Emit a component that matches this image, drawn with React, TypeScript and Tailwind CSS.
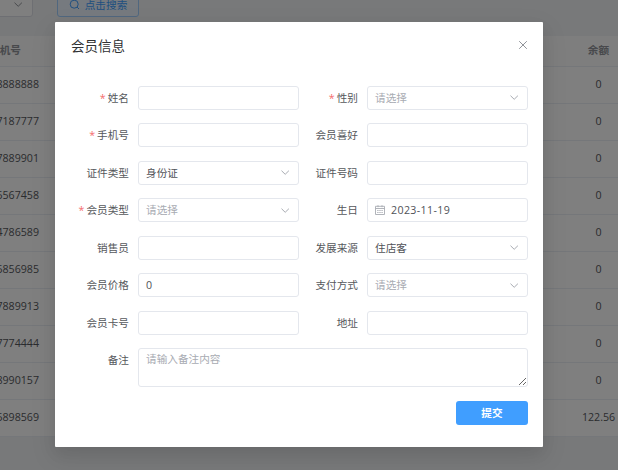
import React from 'react';

const MEMBERS = [
  { phone: '8888888', balance: '0' },
  { phone: '7187777', balance: '0' },
  { phone: '7889901', balance: '0' },
  { phone: '5567458', balance: '0' },
  { phone: '4786589', balance: '0' },
  { phone: '5856985', balance: '0' },
  { phone: '7889913', balance: '0' },
  { phone: '7774444', balance: '0' },
  { phone: '8990157', balance: '0' },
  { phone: '5898569', balance: '122.56' },
];

type Field = {
  label: string;
  kind: 'input' | 'select' | 'date';
  value?: string;
  placeholder?: string;
  required?: boolean;
};

const FIELDS: Field[] = [
  { label: '姓名', kind: 'input', required: true },
  { label: '性别', kind: 'select', placeholder: '请选择', required: true },
  { label: '手机号', kind: 'input', required: true },
  { label: '会员喜好', kind: 'input' },
  { label: '证件类型', kind: 'select', value: '身份证' },
  { label: '证件号码', kind: 'input' },
  { label: '会员类型', kind: 'select', placeholder: '请选择', required: true },
  { label: '生日', kind: 'date', value: '2023-11-19' },
  { label: '销售员', kind: 'input' },
  { label: '发展来源', kind: 'select', value: '住店客' },
  { label: '会员价格', kind: 'input', value: '0' },
  { label: '支付方式', kind: 'select', placeholder: '请选择' },
  { label: '会员卡号', kind: 'input' },
  { label: '地址', kind: 'input' },
];

const ChevronDown = ({ className = '' }: { className?: string }) => (
  <svg className={`shrink-0 ${className}`} width="11" height="11" viewBox="0 0 11 11" fill="none" stroke="currentColor">
    <path d="M1.5 3.7 5.2 7.3 8.9 3.7" />
  </svg>
);

const CalendarIcon = () => (
  <svg className="mr-1.5 shrink-0 text-[#a8abb2]" width="10" height="10" viewBox="0 0 10 10" fill="none" stroke="currentColor" strokeWidth="0.9">
    <path d="M.5 1.3h9v8.2h-9zM.5 3.5h9M3 .2v2M7 .2v2M2.2 5.5h1.4M4.3 5.5h1.4M6.4 5.5h1.4M2.2 7.5h1.4M4.3 7.5h1.4M6.4 7.5h1.4" />
  </svg>
);

const Label = ({ text, required }: { text: string; required?: boolean }) => (
  <label className="flex h-6 w-[68px] shrink-0 items-center justify-end pr-[9px] whitespace-nowrap text-[#56585c]">
    {required && <span className="mr-0.5 text-[#f56c6c]">*</span>}
    {text}
  </label>
);

const FormItem = ({ field }: { field: Field }) => (
  <div className="flex h-6">
    <Label text={field.label} required={field.required} />
    <div className="flex h-6 w-[161px] items-center rounded-[3px] border border-[#e4e7ed] bg-white px-[7px]">
      {field.kind === 'date' && <CalendarIcon />}
      <span
        className={`flex-1 ${field.value ? 'text-[#505257]' : 'text-[#a8abb2]'} ${
          field.kind === 'date' ? 'tracking-[0.36px]' : ''
        }`}
      >
        {field.value ?? field.placeholder}
      </span>
      {field.kind === 'select' && <ChevronDown className="text-[#a8abb2]" />}
    </div>
  </div>
);

const MemberPage = () => (
  <div className="h-full w-full bg-[#f0f2f5]">
    {/* search bar */}
    <div className="flex h-9 items-start">
      <div className="-mt-2 -ml-[67px] flex h-[25px] w-[100px] items-center justify-end rounded-[3px] border border-[#dcdfe6] bg-white pr-2 text-[#909399]">
        <ChevronDown />
      </div>
      <div className="-mt-2 ml-6 flex h-[25px] w-[82px] items-center justify-center rounded-[3px] border border-[#a0cfff] bg-[#ecf5ff] text-[#409eff]">
        <svg className="mr-[5px]" width="11" height="11" viewBox="0 0 11 11" fill="none" stroke="currentColor">
          <circle cx="5.2" cy="5.2" r="4" />
          <path d="m8.1 8.1 1.9 1.9" />
        </svg>
        点击搜索
      </div>
    </div>

    {/* table */}
    <div className="bg-white text-[#56585c]">
      <div className="flex h-[31px] items-center justify-between border-b border-[#ebeef5] bg-[#fcfcfc] pb-0.5 font-bold text-[#909399]">
        <span className="-ml-[11px]">手机号</span>
        <span className="w-[39px] text-center">余额</span>
      </div>
      {MEMBERS.map((m) => (
        <div key={m.phone} className="flex h-[37px] items-center justify-between border-b border-[#ebeef5] pb-0.5">
          <span className="-ml-1 w-[43px] text-right">{m.phone}</span>
          <span className="w-[39px] text-center">{m.balance}</span>
        </div>
      ))}
    </div>
  </div>
);

const MemberDialog = () => (
  <div className="flex h-[425px] w-[488px] flex-col rounded-[1px] bg-white px-[15px] shadow-[0_9px_24px_3px_rgba(0,0,0,0.08),0_6px_15px_rgba(0,0,0,0.06)]">
    <div className="flex h-[47px] items-center justify-between pl-px">
      <h2 className="text-[13.5px] text-[#303133]">会员信息</h2>
      <svg className="-mt-px" width="10" height="10" viewBox="0 0 10 10" fill="none" stroke="#909399">
        <path d="m1.2 1.2 7.6 7.6M8.8 1.2 1.2 8.8" />
      </svg>
    </div>

    <div className="grid grid-cols-[229px_229px] gap-y-[13.5px] pt-[16.75px]">
      {FIELDS.map((field) => (
        <FormItem key={field.label} field={field} />
      ))}
      <div className="col-span-2 flex">
        <Label text="备注" />
        <textarea
          className="block h-[39px] w-[390px] resize rounded-[3px] border border-[#e4e7ed] px-[7px] py-0.5 leading-4 text-[#505257] outline-none placeholder:text-[#a8abb2]"
          placeholder="请输入备注内容"
        />
      </div>
    </div>

    <button className="mt-[14px] h-6 w-[72px] self-end rounded-[3px] bg-[#409eff] font-bold text-white">提交</button>
  </div>
);

const App = () => (
  <div className="relative h-[470px] w-[618px] overflow-hidden font-['Open_Sans','Noto_Sans_CJK_SC',sans-serif] text-[10.65px] leading-4">
    <MemberPage />
    <div className="absolute inset-0 flex items-start justify-center bg-black/50 pt-[22px] pr-5">
      <MemberDialog />
    </div>
  </div>
);

export default App;
